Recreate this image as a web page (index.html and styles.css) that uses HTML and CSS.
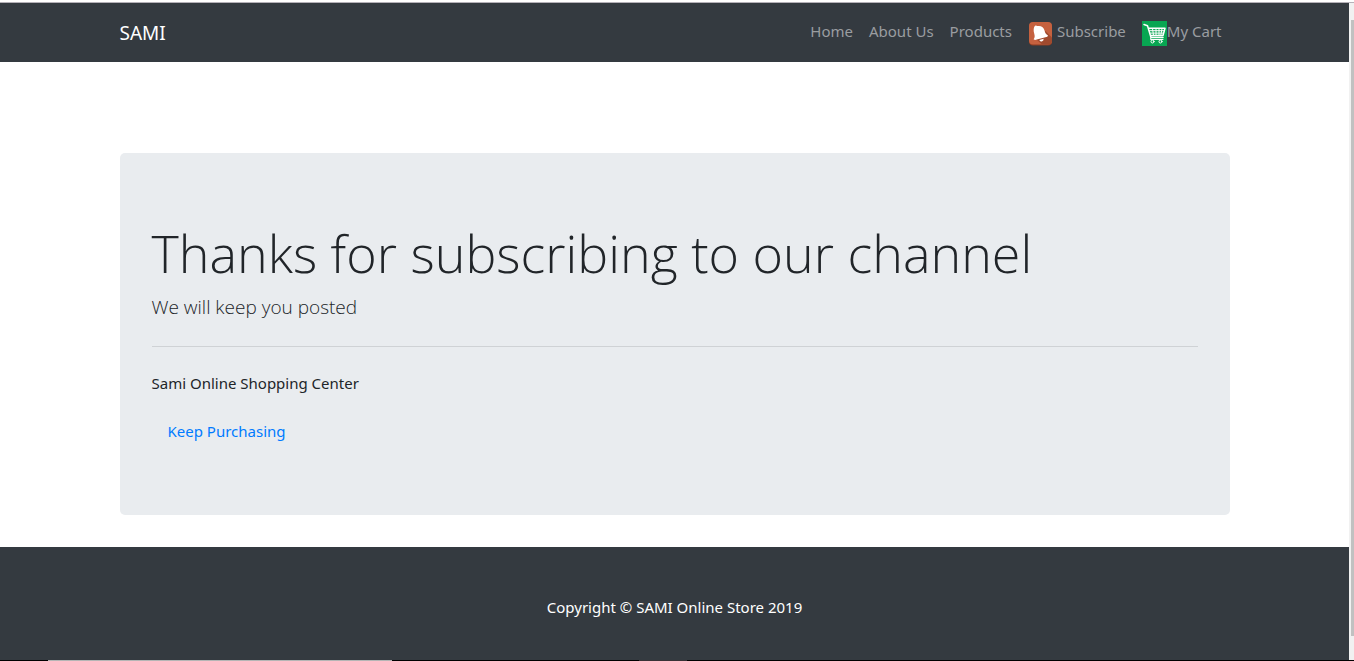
FILE: index.html
```html
<!DOCTYPE html>
<html lang="en">
<head>
<meta charset="utf-8">
<meta name="viewport" content="width=device-width, initial-scale=1">
<title>SAMI Online Store</title>
<link rel="stylesheet" href="styles.css">
</head>
<body>
<div class="window">
  <div class="page">
    <nav class="navbar">
      <div class="container navbar-row">
        <a class="brand" href="#">SAMI</a>
        <ul class="nav-list">
          <li><a class="nav-link" href="#">Home</a></li>
          <li><a class="nav-link" href="#">About Us</a></li>
          <li><a class="nav-link" href="#">Products</a></li>
          <li><a class="nav-link nav-link-spaced" href="#">
            <svg class="nav-icon" viewBox="0 0 25 25" aria-hidden="true">
              <rect x="1" y="1.5" width="23" height="23" rx="4" fill="#8d3d22"/>
              <rect x="1" y="1" width="23" height="22.5" rx="4" fill="#c5613f"/>
              <path d="M17.500 10 24 16.500V20q0 3.500-3.500 3.500H14L8 18z" fill="#a04a2e"/>
              <path d="M6.300 5.700Q7.500 3.900 9.200 5.100C13 4.300 15.800 6.200 16.600 9.700 17.100 12 17.900 13.200 20 14.400L19.300 15.700 7 19.100 5.600 18.300C6.900 16.500 6.900 14.700 6.200 12.400 5.400 9.700 5.600 7.300 6.300 5.700z" fill="#fff"/>
              <path d="M11.300 18.900 15.700 17.700Q15.800 20 13.800 20.400 12.100 20.600 11.300 18.900z" fill="#fff"/>
            </svg>
            <span>Subscribe</span></a></li>
          <li><a class="nav-link" href="#">
            <svg class="nav-icon" viewBox="0 0 25 25" aria-hidden="true">
              <rect width="25" height="25" fill="#08a652"/>
              <g fill="none" stroke="#fff" stroke-linecap="round" stroke-linejoin="round">
                <path stroke-width="1.500" d="M2 3.500 5.500 4.800 9 16.500H21M6.300 7.300H23L21 14.500H8.500"/>
                <path stroke-width="1" d="M7.500 9.700H22M8 12.100H21.500M10.500 7.500 11.500 14.500M14 7.500V14.500M17 7.500V14.500M20 7.500 18.800 14.500M9 16.500 8.500 18.500H21"/>
                <circle cx="10.500" cy="20.500" r="1.500"/>
                <circle cx="18.500" cy="20.500" r="1.500"/>
              </g>
            </svg>
            <span>My Cart</span></a></li>
        </ul>
      </div>
    </nav>
    <main class="container main">
      <section class="jumbotron">
        <h1 class="display">Thanks for subscribing to our channel</h1>
        <p class="lead">We will keep you posted</p>
        <hr class="divider">
        <p class="store">Sami Online Shopping Center</p>
        <a class="button-link" href="#">Keep Purchasing</a>
      </section>
    </main>
    <footer class="footer">
      <p class="copyright">Copyright © SAMI Online Store 2019</p>
    </footer>
  </div>
  <div class="scrollbar" aria-hidden="true"><div class="thumb"></div></div>
</div>
<div class="taskbar" aria-hidden="true"></div>
</body>
</html>
```
FILE: styles.css
```css
* {
  box-sizing: border-box;
}

body {
  margin: 0;
  min-height: 100vh;
  display: flex;
  flex-direction: column;
  background: #fff;
  color: #212529;
  font-family: "Segoe UI", "Noto Sans", "Open Sans", sans-serif;
  font-size: 15px;
  line-height: 24px;
}

a {
  text-decoration: none;
}

.window {
  flex: 1;
  display: grid;
  grid-template-columns: 1fr 5px;
  margin-top: 2px;
  border-top: 1px solid #b5b1b8;
}

.page {
  display: flex;
  flex-direction: column;
}

.container {
  width: 100%;
  max-width: 1140px;
  margin: 0 auto;
  padding: 0 15px;
}

.navbar {
  background: #343a40;
  padding: 8px 0;
}

.navbar-row {
  display: flex;
  align-items: center;
  justify-content: space-between;
}

.brand {
  color: #fff;
  font-size: 19px;
  line-height: 30px;
}

.nav-list {
  display: flex;
  margin: 0;
  padding: 0;
  list-style: none;
}

.nav-link {
  display: flex;
  align-items: flex-start;
  padding: 8px;
  color: #9a9da0;
}

.nav-link-spaced {
  gap: 4px;
}

.nav-icon {
  width: 25px;
  height: 25px;
  margin-top: 2px;
}

.main {
  padding-top: 91px;
  padding-bottom: 32px;
}

.jumbotron {
  padding: 64px 32px;
  border-radius: 5px;
  background: #e9ecef;
}

.display {
  margin: 0 0 3px;
  font-family: "Segoe UI", "Open Sans", sans-serif;
  font-size: 52px;
  font-weight: 300;
  line-height: 72px;
}

.lead {
  margin: 0;
  font-family: "Segoe UI", "Open Sans", sans-serif;
  font-size: 19px;
  font-weight: 300;
  line-height: 30px;
}

.divider {
  margin: 24px 0;
  border: 0;
  border-top: 1px solid #cfd2d5;
}

.store {
  margin: 0 0 16px;
}

.button-link {
  display: inline-block;
  padding: 8px 16px;
  color: #007bff;
  vertical-align: top;
}

.footer {
  flex: 1;
  padding: 48px 15px 40px;
  background: #343a40;
}

.copyright {
  margin: 0;
  color: #fff;
  text-align: center;
}

.scrollbar {
  display: flex;
  padding: 17px 0 24px 2px;
  background: #f1f1f1;
}

.thumb {
  flex: 1;
  background: #c1c1c1;
}

.taskbar {
  height: 1px;
  background: linear-gradient(to right, #000 48px, #b5b5b5 48px 392px, #000 392px 639px, #383236 639px 687px, #000 687px);
}
```
